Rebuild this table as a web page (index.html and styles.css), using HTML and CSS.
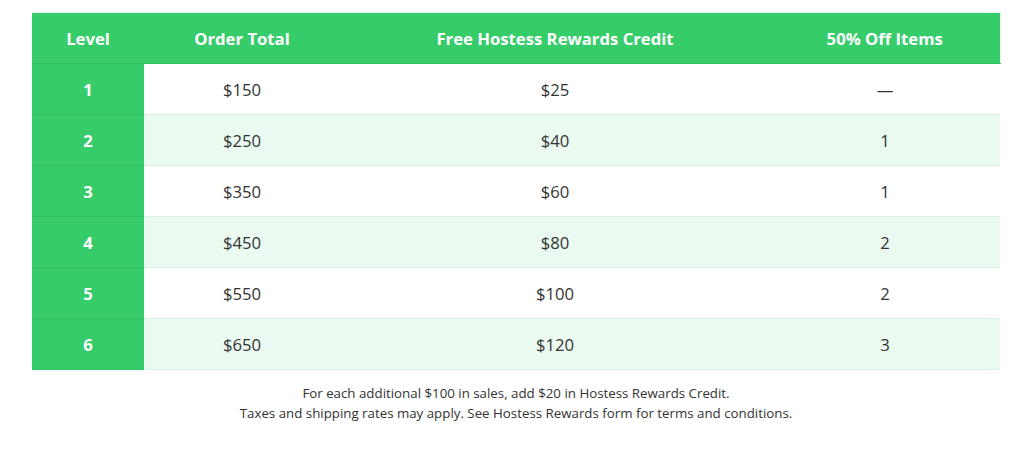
FILE: index.html
```html
<!DOCTYPE html>
<html>
<head>
<meta charset="utf-8">
<link rel="stylesheet" href="styles.css">
</head>
<body>
<div class="wrap">
  <table class="rewards">
    <colgroup>
      <col class="c1"><col class="c2"><col class="c3"><col class="c4">
    </colgroup>
    <thead>
      <tr><th>Level</th><th>Order Total</th><th>Free Hostess Rewards Credit</th><th>50% Off Items</th></tr>
    </thead>
    <tbody>
      <tr><th>1</th><td>$150</td><td>$25</td><td>—</td></tr>
      <tr><th>2</th><td>$250</td><td>$40</td><td>1</td></tr>
      <tr><th>3</th><td>$350</td><td>$60</td><td>1</td></tr>
      <tr><th>4</th><td>$450</td><td>$80</td><td>2</td></tr>
      <tr><th>5</th><td>$550</td><td>$100</td><td>2</td></tr>
      <tr><th>6</th><td>$650</td><td>$120</td><td>3</td></tr>
    </tbody>
  </table>
  <p class="note">For each additional $100 in sales, add $20 in Hostess Rewards Credit.<br>Taxes and shipping rates may apply. See Hostess Rewards form for terms and conditions.</p>
</div>
</body>
</html>
```
FILE: styles.css
```css
html, body { margin: 0; padding: 0; background: #fff; }
body { font-family: "Open Sans", "Liberation Sans", sans-serif; color: #333; }
.wrap { padding: 12px 24px 0 32px; }
.rewards {
  width: 968px;
  border-collapse: collapse;
  table-layout: fixed;
  font-size: 16.7px;
}
.c1 { width: 112px; }
.c2 { width: 196px; }
.c3 { width: 430px; }
.c4 { width: 230px; }
.rewards th, .rewards td {
  height: 50px;
  padding: 0;
  text-align: center;
  vertical-align: middle;
  border-bottom: 1px solid #d8f2e2;
}
.rewards thead th {
  background: #36cc6a;
  color: #fff;
  font-weight: 700;
  border-top: 1px solid #e6f7ec;
  border-bottom: 1px solid #31c062;
}
.rewards thead th:last-child { border-right: 1px solid #e6f7ec; }
.rewards tbody th {
  background: #36cc6a;
  color: #fff;
  font-weight: 700;
  border-bottom: 1px solid #31c062;
}
.rewards tbody tr:last-child th { border-bottom-color: #36cc6a; }
.rewards tbody td { color: #333; }
.rewards tbody tr:nth-child(even) td { background: #eafaf0; }
.note {
  margin: 14px 0 0;
  width: 968px;
  text-align: center;
  font-size: 13.3px;
  line-height: 19.5px;
  color: #333;
}
```
